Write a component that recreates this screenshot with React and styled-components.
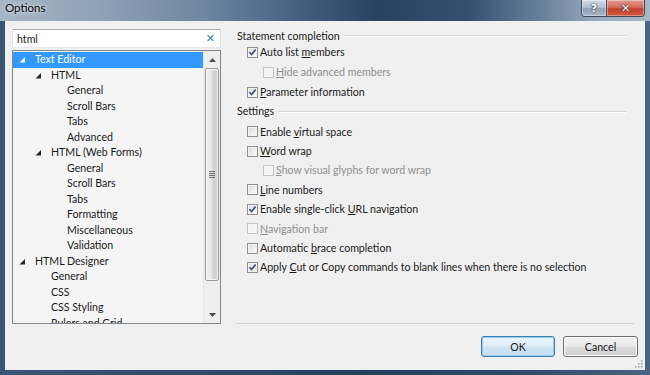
import React from "react";
import styled, { createGlobalStyle } from "styled-components";

const GlobalStyle = createGlobalStyle`
  html, body {
    margin: 0;
    padding: 0;
    background: #ffffff;
  }
  body {
    font-family: Lato, "Noto Sans", sans-serif;
    font-size: 10.6px;
    color: #1a1a1a;
  }
`;

const Window = styled.div`
  width: 650px;
  height: 375px;
  display: flex;
  flex-direction: column;
  background: linear-gradient(90deg, #3a5576 0%, #2c4768 40%, #23405f 55%, #2f4a6c 80%, #4a6483 100%);
  overflow: hidden;
`;

const TitleBar = styled.div`
  height: 21px;
  flex: none;
  display: flex;
  align-items: flex-start;
  background: linear-gradient(90deg, #a6b5c5 0%, #90a2b6 15%, #6d84a0 32%, #3f5a7c 48%, #28435f 58%, #34506f 72%, #6c839e 84%, #9aabbd 92%, #a8b7c6 100%);
`;

const Title = styled.span`
  font-size: 11.5px;
  color: #0c0c0c;
  padding: 1px 0 0 5px;
  line-height: 14px;
  text-shadow: 0 0 4px rgba(255, 255, 255, 0.75), 0 0 8px rgba(255, 255, 255, 0.5);
`;

const CaptionButtons = styled.div`
  margin-left: auto;
  margin-right: 5px;
  display: flex;
  height: 17px;
  border: 1px solid #3b4a5c;
  border-top: none;
  border-radius: 0 0 4px 4px;
  overflow: hidden;
  box-sizing: border-box;
`;

const CaptionButton = styled.div`
  width: ${(p) => p.$w}px;
  display: flex;
  align-items: center;
  justify-content: center;
  color: #ffffff;
  font-family: "DejaVu Sans", sans-serif;
  font-weight: bold;
  font-size: 11px;
  text-shadow: 0 0 2px #1e2a38, 0 0 1px #1e2a38;
  background: ${(p) =>
    p.$close
      ? "linear-gradient(180deg, #e19a8f 0%, #d46c5c 45%, #c2402c 55%, #cf5a3e 100%)"
      : "linear-gradient(180deg, #d2dbe5 0%, #b2c0cf 45%, #8fa1b6 55%, #a7b7c8 100%)"};
  box-shadow: inset 0 0 0 1px rgba(255, 255, 255, 0.35);
  & + & {
    border-left: 1px solid #3b4a5c;
  }
`;

const Client = styled.div`
  position: relative;
  flex: 1;
  margin: 0 5px 5px;
  background: #f0f0f0;
  display: flex;
  flex-direction: column;
  padding: 8px 7px 0 7px;
  box-sizing: border-box;
`;

const Main = styled.div`
  height: 295px;
  display: flex;
  gap: 15px;
`;

const LeftPane = styled.div`
  width: 209px;
  flex: none;
  display: flex;
  flex-direction: column;
`;

const SearchBox = styled.div`
  height: 19px;
  box-sizing: border-box;
  border: 1px solid #abadb3;
  border-left-color: #e2e3ea;
  border-right-color: #dbdfe6;
  border-bottom-color: #e3e9ef;
  background: #ffffff;
  display: flex;
  align-items: center;
  padding: 0 5px 0 4px;
  color: #1a1a1a;
`;

const ClearButton = styled.span`
  margin-left: auto;
  color: #3a78c0;
  font-family: "DejaVu Sans", sans-serif;
  font-weight: bold;
  font-size: 11px;
  line-height: 1;
`;

const Tree = styled.div`
  margin-top: 2px;
  flex: 1;
  border: 1px solid #828790;
  background: #f5f5f5;
  display: flex;
  overflow: hidden;
`;

const TreeList = styled.div`
  flex: 1;
  padding-top: 1px;
  overflow: hidden;
`;

const TreeRow = styled.div`
  height: 15.5px;
  line-height: 15.5px;
  display: flex;
  align-items: center;
  padding-left: ${(p) => 6 + p.$level * 16}px;
  background: ${(p) => (p.$selected ? "#3399ff" : "transparent")};
  color: ${(p) => (p.$selected ? "#ffffff" : "#1a1a1a")};
  white-space: nowrap;
`;

const Expander = styled.span`
  width: 16px;
  flex: none;
  display: flex;
  align-items: center;
  height: 100%;
`;

const ScrollBar = styled.div`
  width: 16px;
  flex: none;
  display: flex;
  flex-direction: column;
  background: #efefef;
  border-left: 1px solid #e6e6e6;
`;

const ScrollArrow = styled.div`
  height: 17px;
  flex: none;
  display: flex;
  align-items: center;
  justify-content: center;
`;

const Track = styled.div`
  flex: 1;
  display: flex;
  flex-direction: column;
`;

const Thumb = styled.div`
  height: 213px;
  margin: 0 1px;
  box-sizing: border-box;
  border: 1px solid #979aa0;
  border-radius: 2px;
  background: linear-gradient(90deg, #f1f1f1 0%, #e6e6e6 45%, #d6d6d6 55%, #cbcbcb 100%);
  box-shadow: inset 0 0 0 1px #f8f8f8;
  display: flex;
  flex-direction: column;
  align-items: center;
  justify-content: center;
  gap: 1px;
`;

const Grip = styled.span`
  width: 6px;
  height: 1px;
  background: #6f6f6f;
`;

const RightPane = styled.div`
  flex: 1;
  margin-right: 4px;
  display: flex;
  flex-direction: column;
  border-bottom: 1px solid #d5d5d5;
`;

const GroupHeader = styled.div`
  height: ${(p) => p.$h}px;
  padding-bottom: ${(p) => p.$pb || 0}px;
  display: flex;
  align-items: center;
  gap: 4px;
  margin-right: 8px;
  padding-left: 1px;
  &::after {
    content: "";
    flex: 1;
    height: 1px;
    background: #d5d5d5;
    box-shadow: 0 1px 0 #ffffff;
  }
`;

const OptionRow = styled.label`
  height: ${(p) => p.$h}px;
  display: flex;
  align-items: center;
  padding-left: ${(p) => (p.$nested ? 27 : 11)}px;
  color: ${(p) => (p.$disabled ? "#8f8f8f" : "#1a1a1a")};
  white-space: pre;
`;

const Box = styled.span`
  box-sizing: border-box;
  width: 11px;
  height: 11px;
  margin-right: 2px;
  flex: none;
  border: 1px solid ${(p) => (p.$disabled ? "#c4c4c4" : "#8e8f8f")};
  background: ${(p) =>
    p.$disabled ? "#f4f4f4" : "linear-gradient(135deg, #d9d9d9 0%, #eeeeee 55%, #fdfdfd 100%)"};
  box-shadow: inset 0 0 0 1px ${(p) => (p.$disabled ? "#f7f7f7" : "#f4f4f4")};
  display: flex;
  align-items: center;
  justify-content: center;
`;

const OptionText = styled.span`
  white-space: pre;
`;

const Key = styled.u`
  text-decoration: underline;
  text-underline-offset: 1px;
`;

const Footer = styled.div`
  display: flex;
  justify-content: flex-end;
  gap: 8px;
  padding-top: 12px;
`;

const Button = styled.button`
  width: ${(p) => p.$w}px;
  height: 21px;
  box-sizing: border-box;
  padding: 0;
  font: inherit;
  color: #1a1a1a;
  border-radius: 3px;
  border: 1px solid ${(p) => (p.$default ? "#3c7fb1" : "#707070")};
  background: ${(p) =>
    p.$default
      ? "linear-gradient(180deg, #eaf4fb 0%, #e0eef8 48%, #cfe5f4 52%, #c4def1 100%)"
      : "linear-gradient(180deg, #f2f2f2 0%, #ebebeb 48%, #dddddd 52%, #cfcfcf 100%)"};
  box-shadow: inset 0 0 0 1px ${(p) => (p.$default ? "#8fd0f4" : "#fcfcfc")};
`;

const ResizeGrip = styled.svg`
  position: absolute;
  right: 2px;
  bottom: 2px;
`;

const TreeArrow = ({ light }) => (
  <svg width="7" height="7" viewBox="0 0 7 7">
    <polygon points="6,1 6,6.5 0.5,6.5" fill={light ? "#ffffff" : "#262626"} />
  </svg>
);

const Check = () => (
  <svg width="9" height="9" viewBox="0 0 9 9">
    <path d="M1.5 4.2 L3.6 6.6 L7.6 1.6" fill="none" stroke="#3d4f85" strokeWidth="1.6" />
  </svg>
);

const treeItems = [
  { label: "Text Editor", level: 0, open: true, selected: true },
  { label: "HTML", level: 1, open: true },
  { label: "General", level: 2 },
  { label: "Scroll Bars", level: 2 },
  { label: "Tabs", level: 2 },
  { label: "Advanced", level: 2 },
  { label: "HTML (Web Forms)", level: 1, open: true },
  { label: "General", level: 2 },
  { label: "Scroll Bars", level: 2 },
  { label: "Tabs", level: 2 },
  { label: "Formatting", level: 2 },
  { label: "Miscellaneous", level: 2 },
  { label: "Validation", level: 2 },
  { label: "HTML Designer", level: 0, open: true },
  { label: "General", level: 1 },
  { label: "CSS", level: 1 },
  { label: "CSS Styling", level: 1 },
  { label: "Rulers and Grid", level: 1 },
];

const groups = [
  {
    title: "Statement completion",
    headHeight: 13,
    rowHeight: 20,
    items: [
      { pre: "Auto list ", key: "m", post: "embers", checked: true },
      { pre: "", key: "H", post: "ide advanced members", nested: true, disabled: true },
      { pre: "", key: "P", post: "arameter information", checked: true },
    ],
  },
  {
    title: "Settings",
    headHeight: 18,
    headPad: 2,
    rowHeight: 19.4,
    items: [
      { pre: "Enable ", key: "v", post: "irtual space" },
      { pre: "", key: "W", post: "ord wrap" },
      { pre: "", key: "S", post: "how visual glyphs for word wrap", nested: true, disabled: true },
      { pre: "", key: "L", post: "ine numbers" },
      { pre: "Enable single-click ", key: "U", post: "RL navigation", checked: true },
      { pre: "", key: "N", post: "avigation bar", disabled: true },
      { pre: "Automatic ", key: "b", post: "race completion" },
      {
        pre: "Apply ",
        key: "C",
        post: "ut or Copy commands to blank lines when there is no selection",
        checked: true,
      },
    ],
  },
];

export default function App() {
  return (
    <>
      <GlobalStyle />
      <Window>
        <TitleBar>
          <Title>Options</Title>
          <CaptionButtons>
            <CaptionButton $w={24}>?</CaptionButton>
            <CaptionButton $w={37} $close>
              ✕
            </CaptionButton>
          </CaptionButtons>
        </TitleBar>
        <Client>
          <Main>
            <LeftPane>
              <SearchBox>
                html
                <ClearButton>✕</ClearButton>
              </SearchBox>
              <Tree>
                <TreeList>
                  {treeItems.map((item, i) => (
                    <TreeRow key={i} $level={item.level} $selected={item.selected}>
                      <Expander>{item.open && <TreeArrow light={item.selected} />}</Expander>
                      {item.label}
                    </TreeRow>
                  ))}
                </TreeList>
                <ScrollBar>
                  <ScrollArrow>
                    <svg width="7" height="4" viewBox="0 0 7 4">
                      <polygon points="3.5,0 7,4 0,4" fill="#4d4d4d" />
                    </svg>
                  </ScrollArrow>
                  <Track>
                    <Thumb>
                      <Grip />
                      <Grip />
                      <Grip />
                      <Grip />
                    </Thumb>
                  </Track>
                  <ScrollArrow>
                    <svg width="7" height="4" viewBox="0 0 7 4">
                      <polygon points="0,0 7,0 3.5,4" fill="#4d4d4d" />
                    </svg>
                  </ScrollArrow>
                </ScrollBar>
              </Tree>
            </LeftPane>
            <RightPane>
              {groups.map((g) => (
                <div key={g.title}>
                  <GroupHeader $h={g.headHeight} $pb={g.headPad}>
                    {g.title}
                  </GroupHeader>
                  {g.items.map((o, i) => (
                    <OptionRow key={i} $h={g.rowHeight} $nested={o.nested} $disabled={o.disabled}>
                      <Box $disabled={o.disabled}>{o.checked && <Check />}</Box>
                      <OptionText>
                        {o.pre}
                        <Key>{o.key}</Key>
                        {o.post}
                      </OptionText>
                    </OptionRow>
                  ))}
                </div>
              ))}
            </RightPane>
          </Main>
          <Footer>
            <Button $w={74} $default>
              OK
            </Button>
            <Button $w={75}>Cancel</Button>
          </Footer>
          <ResizeGrip width="9" height="9" viewBox="0 0 9 9">
            {[
              [7, 1],
              [7, 4],
              [4, 4],
              [7, 7],
              [4, 7],
              [1, 7],
            ].map(([x, y], i) => (
              <rect key={i} x={x} y={y} width="1.5" height="1.5" fill="#a0a0a0" />
            ))}
          </ResizeGrip>
        </Client>
      </Window>
    </>
  );
}
